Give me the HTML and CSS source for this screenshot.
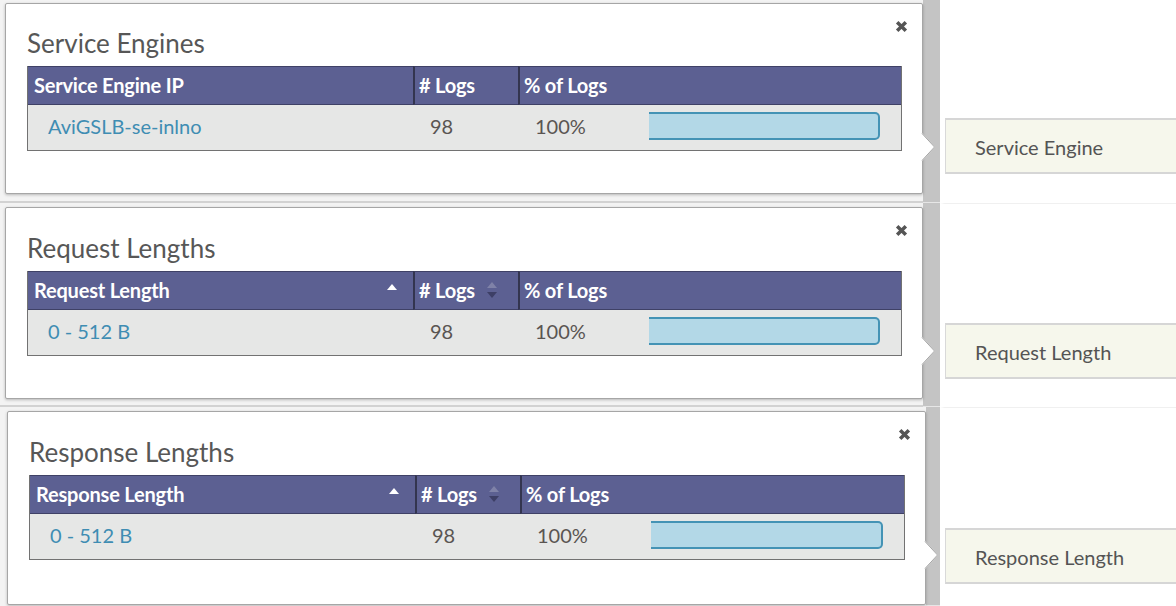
FILE: index.html
```html
<!DOCTYPE html>
<html lang="en">
<head>
<meta charset="utf-8">
<title>Log analytics popovers</title>
<link rel="stylesheet" href="styles.css">
</head>
<body>
<div class="screen">

  <section class="shot shot-1">
    <div class="stage">
      <div class="popover">
        <svg class="close" viewBox="0 0 12 12" width="13" height="13"><path d="M2 2L10 10M10 2L2 10"/></svg>
        <h2 class="title">Service Engines</h2>
        <div class="grid">
          <div class="th c1">Service Engine IP</div>
          <div class="th c2">#&nbsp;Logs</div>
          <div class="th c3">% of Logs</div>
          <div class="td c1"><span class="link">AviGSLB-se-inlno</span></div>
          <div class="td c2">98</div>
          <div class="td c3">100%</div>
          <div class="td c4"><span class="bar"></span></div>
        </div>
        <svg class="arrow" viewBox="0 0 14 28" width="14" height="28"><path class="fill" d="M0 0L13 14L0 28Z"/><path class="edge" d="M0 0.5L12.5 14L0 27.5"/></svg>
      </div>
    </div>
    <div class="scroll"></div>
    <div class="side"><div class="item">Service Engine</div></div>
  </section>

  <section class="shot shot-2">
    <div class="stage">
      <div class="popover">
        <svg class="close" viewBox="0 0 12 12" width="13" height="13"><path d="M2 2L10 10M10 2L2 10"/></svg>
        <h2 class="title">Request Lengths</h2>
        <div class="grid">
          <div class="th c1">Request Length <svg class="sort-up" viewBox="0 0 10 6" width="10" height="6"><path d="M0 6L5 0L10 6Z"/></svg></div>
          <div class="th c2">#&nbsp;Logs <svg class="sort-both" viewBox="0 0 12 20" width="12" height="20"><path class="up" d="M1 8L6 2L11 8Z"/><path class="down" d="M1 12L6 18L11 12Z"/></svg></div>
          <div class="th c3">% of Logs</div>
          <div class="td c1"><span class="link">0 - 512 B</span></div>
          <div class="td c2">98</div>
          <div class="td c3">100%</div>
          <div class="td c4"><span class="bar"></span></div>
        </div>
        <svg class="arrow" viewBox="0 0 14 28" width="14" height="28"><path class="fill" d="M0 0L13 14L0 28Z"/><path class="edge" d="M0 0.5L12.5 14L0 27.5"/></svg>
      </div>
    </div>
    <div class="scroll"></div>
    <div class="side"><div class="item">Request Length</div></div>
  </section>

  <section class="shot shot-3">
    <div class="stage">
      <div class="popover">
        <svg class="close" viewBox="0 0 12 12" width="13" height="13"><path d="M2 2L10 10M10 2L2 10"/></svg>
        <h2 class="title">Response Lengths</h2>
        <div class="grid">
          <div class="th c1">Response Length <svg class="sort-up" viewBox="0 0 10 6" width="10" height="6"><path d="M0 6L5 0L10 6Z"/></svg></div>
          <div class="th c2">#&nbsp;Logs <svg class="sort-both" viewBox="0 0 12 20" width="12" height="20"><path class="up" d="M1 8L6 2L11 8Z"/><path class="down" d="M1 12L6 18L11 12Z"/></svg></div>
          <div class="th c3">% of Logs</div>
          <div class="td c1"><span class="link">0 - 512 B</span></div>
          <div class="td c2">98</div>
          <div class="td c3">100%</div>
          <div class="td c4"><span class="bar"></span></div>
        </div>
        <svg class="arrow" viewBox="0 0 14 28" width="14" height="28"><path class="fill" d="M0 0L13 14L0 28Z"/><path class="edge" d="M0 0.5L12.5 14L0 27.5"/></svg>
      </div>
    </div>
    <div class="scroll"></div>
    <div class="side"><div class="item">Response Length</div></div>
  </section>

</div>
</body>
</html>
```

FILE: styles.css
```css
* { box-sizing: border-box; }

html, body {
  margin: 0;
  padding: 0;
  background: #ffffff;
  font-family: Lato, "Open Sans", "Liberation Sans", sans-serif;
  color: #555555;
}

.screen {
  width: 1176px;
  height: 606px;
  display: flex;
  flex-direction: column;
  overflow: hidden;
}

.shot {
  display: flex;
  flex: none;
}
.shot-1 { height: 203px; }
.shot-2 { height: 204px; }
.shot-3 { height: 199px; }

.stage {
  width: 923px;
  flex: none;
  background: #f3f3f3;
  border-bottom: 2px solid #d2d2d2;
  position: relative;
  z-index: 2;
}
.shot-3 .stage { width: 926px; border-bottom: 0; }

.popover {
  position: relative;
  margin: 3px 0 0 5px;
  height: 191px;
  background: #ffffff;
  border: 1px solid #a6a6a6;
  border-radius: 2px;
  box-shadow: 0 1px 3px rgba(0, 0, 0, 0.25);
  padding: 0 20px 0 21px;
}
.shot-2 .popover { margin-top: 4px; height: 192px; }
.shot-3 .popover { margin: 4px 0 0 7px; height: 194px; }

.close {
  position: absolute;
  top: 16px;
  right: 14px;
  fill: none;
  stroke: #555555;
  stroke-width: 3.2;
  stroke-linecap: butt;
}

.title {
  margin: 24px 0 7px;
  font-size: 26px;
  line-height: 31px;
  font-weight: 400;
  color: #575757;
}
.shot-2 .title { margin-top: 25px; }
.shot-3 .title { margin-top: 25px; }

.grid {
  display: grid;
  grid-template-columns: 385px 105px 131px 1fr;
  grid-template-rows: 38px 45px;
  border: 1px solid #727272;
}

.th {
  background: #5c6092;
  color: #ffffff;
  font-weight: 700;
  font-size: 20px;
  letter-spacing: -0.2px;
  display: flex;
  align-items: center;
  padding-left: 6px;
  padding-bottom: 1px;
  border-bottom: 1px solid #3f4166;
  border-top: 1px solid #3f4166;
  margin-top: -1px;
  white-space: nowrap;
}
.th.c1 { padding-left: 6px; justify-content: space-between; padding-right: 16px; }
.th.c2 { border-left: 2px solid #33354f; padding-left: 4px; gap: 11px; }
.th.c3 { border-left: 2px solid #33354f; padding-left: 4px; grid-column: 3 / 5; }

.sort-up { fill: #ffffff; margin-top: -6px; }
.sort-both .up { fill: #7f82a8; }
.sort-both .down { fill: #3d3f66; }

.td {
  background: #e6e7e6;
  font-size: 20px;
  display: flex;
  align-items: center;
  padding-bottom: 3px;
  color: #5a5552;
}
.td.c1 { padding-left: 20px; }
.td.c2 { padding-left: 17px; }
.td.c3 { padding-left: 17px; }
.td.c4 { padding-right: 21px; padding-bottom: 0; }

.link { color: #3f8db3; }

.bar {
  display: block;
  width: 100%;
  height: 28px;
  margin-top: -3px;
  background: #b3d8e7;
  border: 2px solid #4493b5;
  border-left: 0;
  border-radius: 0 5px 5px 0;
}

.arrow {
  position: absolute;
  right: -14px;
  top: 129px;
  overflow: visible;
}
.arrow .fill { fill: #ffffff; }
.arrow .edge { fill: none; stroke: #a6a6a6; stroke-width: 1; }

.scroll {
  width: 17px;
  flex: none;
  background: #c4c4c4;
  border-bottom: 1px solid #e6e6e6;
}
.shot-3 .scroll { width: 14px; }

.side {
  flex: 1;
  border-left: 5px solid #ffffff;
  background: #ffffff;
  border-top: 1px solid #f0f0f0;
}
.shot-1 .side { padding-top: 118px; border-top: 0; }
.shot-2 .side { padding-top: 119px; }
.shot-3 .side { padding-top: 120px; }

.item {
  height: 56px;
  background: #f6f7ec;
  border-top: 2px solid #d6d6d6;
  border-bottom: 2px solid #d6d6d6;
  border-left: 1px solid #d9d9d9;
  display: flex;
  align-items: center;
  padding-left: 29px;
  padding-top: 2px;
  font-size: 20px;
  color: #545454;
}
```
